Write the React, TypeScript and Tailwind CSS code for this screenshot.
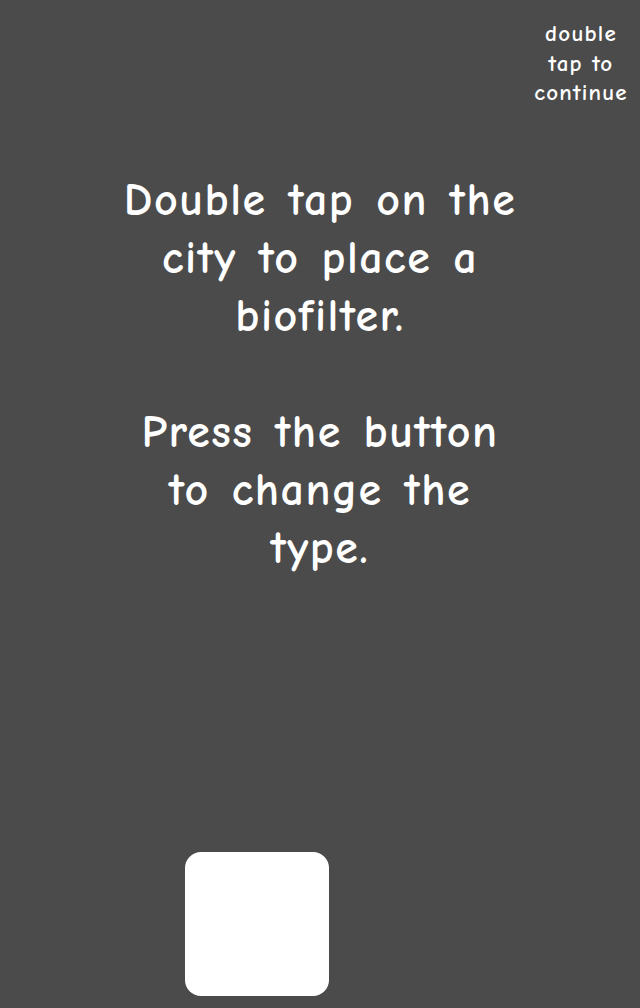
export default function App() {
  const font = { fontFamily: '"Comic Sans MS", "Comic Neue", "Open Sans", sans-serif' };
  return (
    <div className="relative w-[640px] h-[1008px] bg-[#4b4b4b] text-white overflow-hidden" style={font}>
      {/* skip hint */}
      <div className="absolute right-[4px] top-[19px] w-[110px] text-center font-bold text-[23px] leading-[29.5px] tracking-[1.2px]">
        double
        <br />
        tap to
        <br />
        continue
      </div>

      <div className="flex flex-col items-center pt-[172px] text-center font-bold text-[46px] leading-[58px] tracking-[1.5px] [word-spacing:4px] whitespace-nowrap">
        <p>Double tap on the</p>
        <p>city to place a</p>
        <p>biofilter.</p>
        <p className="mt-[58px]">Press the button</p>
        <p>to change the</p>
        <p>type.</p>
      </div>

      <div className="absolute left-[185px] top-[852px] w-[144px] h-[144px] rounded-[16px] bg-white" />
    </div>
  );
}
